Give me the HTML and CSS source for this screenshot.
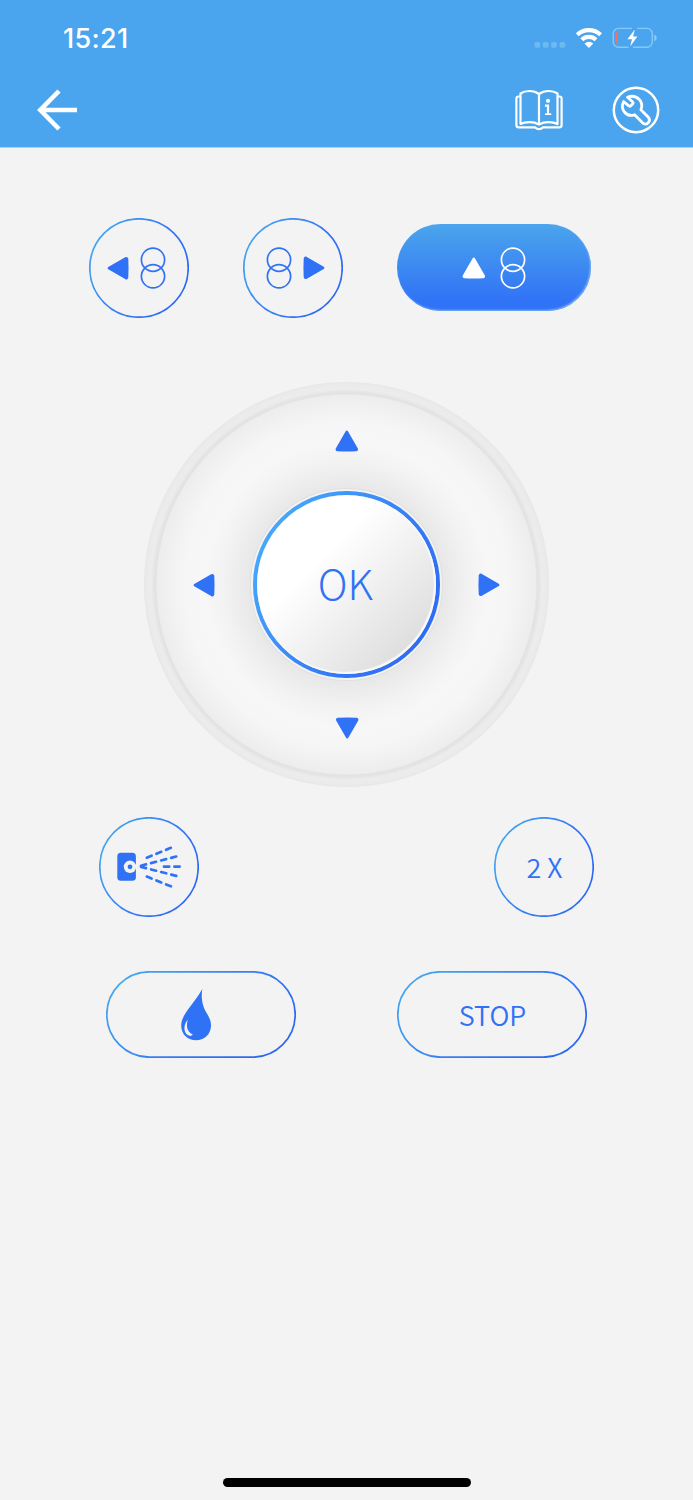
FILE: index.html
```
<!DOCTYPE html>
<html lang="en">
<head>
    <meta charset="utf-8" />
    <meta name="viewport" content="width=device-width, initial-scale=1.0">
    <title>Remote Control</title>
    <link rel="stylesheet" href="styles.css">
</head>
<body>
    <svg class="defs" width="0" height="0">
        <defs>
            <linearGradient id="line" x1="0" y1="0.25" x2="1" y2="0.75">
                <stop offset="0" stop-color="#45a6ee" />
                <stop offset="0.6" stop-color="#3478f6" />
                <stop offset="1" stop-color="#2b66f3" />
            </linearGradient>
            <symbol id="tri" viewBox="0 0 24 22">
                <path d="M11.8 1.9 L21.6 18.8 Q22 19.9 21 20 Q11.8 20.5 2.6 20 Q1.6 19.9 2 18.8 Z" fill="currentColor" stroke="currentColor" stroke-width="2.6" stroke-linejoin="round" />
            </symbol>
            <symbol id="rings" viewBox="0 0 26 44">
                <g fill="none" stroke="currentColor" stroke-width="1.7">
                    <circle cx="13" cy="13.7" r="11.6" />
                    <circle cx="13" cy="30.3" r="11.6" />
                </g>
            </symbol>
        </defs>
    </svg>

    <div class="header">
        <div class="status">
            <span class="time">15:21</span>
            <svg class="status-icons" width="124" height="26" viewBox="534 25 124 26">
                <g fill="#6bbaf2">
                    <rect x="534.5" y="42" width="5.8" height="5.8" rx="1.8" />
                    <rect x="542.8" y="42" width="5.8" height="5.8" rx="1.8" />
                    <rect x="551.1" y="42" width="5.8" height="5.8" rx="1.8" />
                    <rect x="559.5" y="42" width="5.8" height="5.8" rx="1.8" />
                </g>
                <g fill="none" stroke="#fff" stroke-width="4.2">
                    <path d="M577.2 34.7 A17.2 17.2 0 0 1 600.6 34.7" />
                    <path d="M581.8 39.8 A10.3 10.3 0 0 1 596 39.8" />
                </g>
                <path d="M584.5 43.4 Q588.9 39.9 593.3 43.4 L588.9 48 Z" fill="#fff" />
                <path d="M632 28.4 H618.5 A5.3 5.3 0 0 0 613.2 33.7 V42 A5.3 5.3 0 0 0 618.5 47.3 H628.5 M637 28.4 H647 A5.3 5.3 0 0 1 652.3 33.7 V42 A5.3 5.3 0 0 1 647 47.3 H633" fill="none" stroke="#82caf8" stroke-width="1.4" />
                <path d="M654.2 34.6 Q656.8 35.6 656.8 37.9 Q656.8 40.2 654.2 41.2 Z" fill="#82caf8" />
                <rect x="615.6" y="32" width="1.9" height="11.8" rx="0.9" fill="#f0726a" />
                <path d="M634.8 29.5 L627.4 39.2 H632 L630.2 46.5 L637.4 36.6 H633.1 Z" fill="#fff" />
            </svg>
        </div>
        <div class="nav">
            <svg class="back" width="42" height="42" viewBox="0 0 42 42">
                <path d="M41 21 H5 M23 2 L4.3 21 L23 40" fill="none" stroke="#fff" stroke-width="4.6" />
            </svg>
            <svg class="book" width="48" height="42" viewBox="0 0 48 42">
                <g fill="none" stroke="#fff" stroke-width="2.2" stroke-linejoin="round">
                    <path d="M24 5 Q20 2 14.5 2 Q9 2 5.5 4.5 V35 Q9 33.2 14.5 33.2 Q20 33.2 24 35.5 Q28 33.2 33.5 33.2 Q39 33.2 42.5 35 V4.5 Q39 2 33.5 2 Q28 2 24 5 V35" />
                    <path d="M5.5 7.5 H3.5 Q1.4 7.5 1.4 9.6 V36 Q1.4 38.4 3.8 38.4 H20 Q22 40.2 24 40.2 Q26 40.2 28 38.4 H44.2 Q46.6 38.4 46.6 36 V9.6 Q46.6 7.5 44.5 7.5 H42.5" />
                    <path d="M30 16.6 H33 V25.2" stroke-linejoin="miter" />
                    <path d="M30 25.2 H36.3" stroke-width="1.6" />
                </g>
                <circle cx="33" cy="11.8" r="2.1" fill="#fff" />
            </svg>
            <svg class="tool" width="48" height="48" viewBox="0 0 48 48">
                <g fill="none" stroke="#fff" stroke-width="2.5" stroke-linejoin="round">
                    <circle cx="24" cy="24" r="22.2" />
                    <path stroke-width="2.8" d="M15.5 11.2 L20.8 16 Q21.5 16.9 20.8 17.8 L18.6 20 Q17.8 20.6 16.9 19.9 L11.6 15.6 Q8.8 21.3 12.4 26 Q16.6 31 22.6 28.7 L31 37.2 Q33.8 39.2 36.2 36.7 Q38.6 34.2 36.6 31.6 L28.9 23.7 Q31.4 18 27.3 13.4 Q22.5 8.6 15.5 11.2 Z" />
                </g>
            </svg>
        </div>
    </div>

    <div class="container">
        <div class="row top-row">
            <button class="btn round turn-left">
                <svg class="frame" viewBox="0 0 100 100"><circle cx="50" cy="50" r="49.2" /></svg>
                <svg class="tri left"><use href="#tri" /></svg>
                <svg class="rings"><use href="#rings" /></svg>
            </button>
            <button class="btn round turn-right">
                <svg class="frame" viewBox="0 0 100 100"><circle cx="50" cy="50" r="49.2" /></svg>
                <svg class="rings"><use href="#rings" /></svg>
                <svg class="tri right"><use href="#tri" /></svg>
            </button>
            <button class="btn pill active">
                <svg class="tri"><use href="#tri" /></svg>
                <svg class="rings"><use href="#rings" /></svg>
            </button>
        </div>

        <div class="dial">
            <svg class="tri up"><use href="#tri" /></svg>
            <svg class="tri left"><use href="#tri" /></svg>
            <button class="ok"><span>OK</span></button>
            <svg class="tri right"><use href="#tri" /></svg>
            <svg class="tri down"><use href="#tri" /></svg>
        </div>

        <div class="row mid-row">
            <button class="btn round">
                <svg class="frame" viewBox="0 0 100 100"><circle cx="50" cy="50" r="49.2" /></svg>
                <svg width="66" height="44" viewBox="0 0 66 44">
                    <rect x="1.3" y="7.8" width="18.6" height="28" rx="3.6" fill="#3072f6" />
                    <circle cx="14" cy="21.8" r="6.2" fill="#f3f3f3" />
                    <circle cx="14" cy="21.8" r="2.4" fill="#3072f6" />
                    <g fill="none" stroke="#3072f6" stroke-width="2.7" stroke-linecap="round" stroke-dasharray="5.2 5.2">
                        <path d="M30.8 12.7 L57 2" />
                        <path d="M25 20.7 L62.4 11" />
                        <path d="M48 21.7 H65" />
                        <path d="M25 21.9 L62.4 31.4" />
                        <path d="M30.8 31.6 L57 42.2" />
                    </g>
                </svg>
            </button>
            <button class="btn round">
                <svg class="frame" viewBox="0 0 100 100"><circle cx="50" cy="50" r="49.2" /></svg>
                <span class="label">2 X</span>
            </button>
        </div>

        <div class="row bottom-row">
            <button class="btn pill drop">
                <svg class="frame" viewBox="0 0 190 87"><rect x="0.8" y="0.8" width="188.4" height="85.4" rx="42.7" /></svg>
                <svg width="32" height="52" viewBox="0 0 32 52">
                    <path d="M22.3 0 C20.5 11.5 23.5 19.5 27.5 25.5 C30 30 31 32.5 31 36.5 C31 45.5 24 51.3 16 51.3 C8 51.3 1.2 45.5 1.2 36.5 C1.2 31.5 3.5 27 8 20.5 C13 13.5 18 7.5 22.3 0 Z" fill="#3072f6" />
                    <path d="M7.8 30.7 C2.5 36.5 3.5 46 10.6 47.1 L12.9 45.4 C7.2 43 5.8 37.5 7.8 30.7 Z" fill="#f3f3f3" />
                </svg>
            </button>
            <button class="btn pill">
                <svg class="frame" viewBox="0 0 190 87"><rect x="0.8" y="0.8" width="188.4" height="85.4" rx="42.7" /></svg>
                <span class="label">STOP</span>
            </button>
        </div>
    </div>

    <div class="home-bar"></div>
</body>
</html>
```

FILE: styles.css
```
* {
    box-sizing: border-box;
}

body {
    margin: 0;
    height: 1500px;
    background-color: #f3f3f3;
    font-family: "Noto Sans CJK SC", sans-serif;
    color: #3072f6;
    display: flex;
    flex-direction: column;
    overflow: hidden;
}

svg {
    display: block;
    flex: none;
}

.defs {
    position: absolute;
}

.header {
    height: 148px;
    background: linear-gradient(#4ba5ee 147px, #a8d2f1 147px);
}

.status {
    height: 76px;
    padding: 0 35px 0 63px;
    display: flex;
    align-items: center;
    justify-content: space-between;
}

.time {
    font-family: Inter, sans-serif;
    font-size: 27px;
    font-weight: 500;
    letter-spacing: 0.3px;
    color: white;
}

.nav {
    height: 68px;
    padding: 0 33px 0 36px;
    display: flex;
    align-items: center;
}

.book {
    margin-left: auto;
    margin-right: 49px;
}

.container {
    flex: 1;
}

.row {
    display: flex;
    align-items: center;
}

.top-row {
    height: 100px;
    margin-top: 70px;
    padding-left: 89px;
    gap: 54px;
}

.btn {
    position: relative;
    display: flex;
    align-items: center;
    justify-content: center;
    padding: 0;
    border: none;
    background: none;
    color: inherit;
    font-family: inherit;
    font-size: 27px;
    font-weight: 350;
    line-height: 1;
}

.label {
    padding: 0 0 1px 1px;
}

.frame {
    position: absolute;
    inset: 0;
    width: 100%;
    height: 100%;
    fill: none;
    stroke: url(#line);
    stroke-width: 1.7;
}

.round {
    width: 100px;
    height: 100px;
}

.top-row .round {
    gap: 10px;
}

.turn-left {
    padding-right: 6px;
}

.turn-right {
    padding-left: 6px;
}

.pill {
    width: 190px;
    height: 87px;
}

.active {
    width: 194px;
    margin-bottom: 1px;
    padding: 1px 1px 0 0;
    gap: 14px;
    border-radius: 44px;
    background: linear-gradient(#4ba5ec, #3173f6 88%);
    box-shadow: inset -1px -1px 2px #7db1f3;
    color: white;
}

.tri {
    width: 24px;
    height: 22px;
}

.rings {
    width: 26px;
    height: 44px;
}

.left {
    transform: rotate(-90deg);
}

.right {
    transform: rotate(90deg);
}

.down {
    transform: rotate(180deg);
}

.dial {
    width: 405px;
    height: 405px;
    margin: 64px auto 0;
    padding: 48px;
    border-radius: 50%;
    display: grid;
    grid-template-columns: 24px 1fr 24px;
    grid-template-rows: 22px 1fr 22px;
    align-items: center;
    justify-items: center;
    background: radial-gradient(closest-side, #e8e8e8 48%, #ededed 54%, #f3f3f3 62%, #f7f7f7 70%, #f6f6f6 80%, #ededed 93.5%, #e2e2e2 94.2%, #e4e4e4 95%, #ececec 96.5%, #ebebeb 98.5%, #e7e7e7 100%);
}

.dial .up, .dial .down {
    grid-column: 1 / 4;
}

.ok {
    width: 187px;
    height: 187px;
    padding: 4px;
    border: none;
    border-radius: 50%;
    background: linear-gradient(120deg, #45a6fa 15%, #3478f6 65%, #2b66f3);
    box-shadow: 0 0 0 2px #f3f3f3, 0 0 0 3px #e0e0e0;
    font-family: inherit;
    color: inherit;
}

.ok span {
    display: flex;
    width: 179px;
    height: 179px;
    padding: 0 2px 5px 0;
    align-items: center;
    justify-content: center;
    border-radius: 50%;
    background: linear-gradient(135deg, white 35%, #dfdfdf 84%);
    box-shadow: inset -1px -1px 1px 1px #fafafa;
    font-size: 41px;
    font-weight: 300;
    line-height: 1;
}

.mid-row {
    margin: 30px 99px 0;
    justify-content: space-between;
}

.bottom-row {
    margin: 54px 106px 0;
    justify-content: space-between;
}

.drop {
    padding-right: 10px;
}

.home-bar {
    width: 248px;
    height: 9px;
    margin: 0 auto 13px;
    border-radius: 5px;
    background-color: black;
}
```
